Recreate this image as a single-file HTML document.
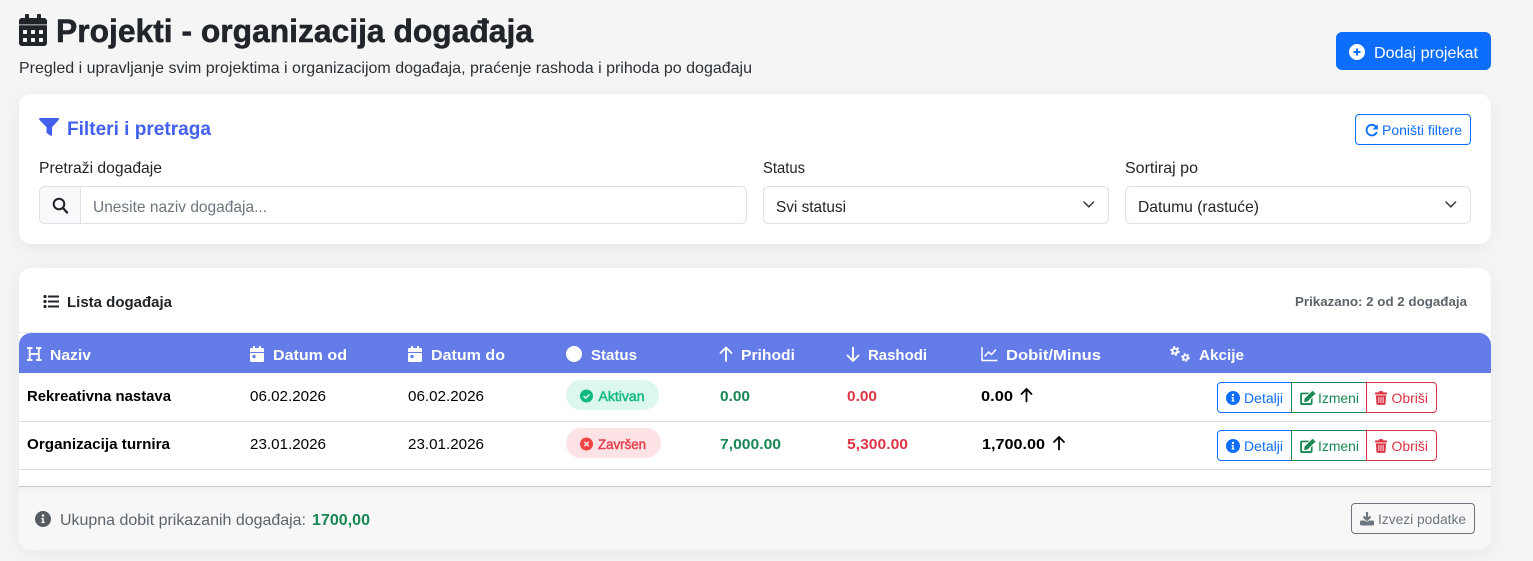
<!DOCTYPE html>
<html lang="sr"><head><meta charset="utf-8"><title>Projekti</title>
<style>
html,body{margin:0;padding:0;width:1533px;height:561px;overflow:hidden;background:#f5f5f5;font-family:"Liberation Sans",sans-serif}
.b{position:absolute;box-sizing:border-box}
.card{background:#fff;border-radius:12px;box-shadow:0 4px 20px rgba(0,0,0,.06)}
svg.o{position:absolute;left:0;top:0}
text{font-family:"Liberation Sans",sans-serif}
.w{font-weight:700}
</style></head><body>
<div class="b" style="left:1336px;top:32px;width:155px;height:38px;background:#0d6efd;border-radius:6px"></div>
<div class="b card" style="left:19px;top:94px;width:1472px;height:150px"></div>
<div class="b" style="left:1355px;top:114px;width:116px;height:31px;border:1px solid #0d6efd;border-radius:4px"></div>
<div class="b" style="left:39px;top:186px;width:708px;height:38px;border:1px solid #dee2e6;border-radius:6px"></div>
<div class="b" style="left:39px;top:186px;width:42px;height:38px;border:1px solid #dee2e6;border-radius:6px 0 0 6px;background:#f8f9fa"></div>
<div class="b" style="left:763px;top:186px;width:346px;height:38px;border:1px solid #dee2e6;border-radius:6px"></div>
<div class="b" style="left:1125px;top:186px;width:346px;height:38px;border:1px solid #dee2e6;border-radius:6px"></div>

<div class="b card" style="left:19px;top:268px;width:1472px;height:282px;overflow:hidden">
  <div class="b" style="left:0;top:64px;width:1472px;height:1px;background:#e9ecef"></div>
  <div class="b" style="left:0;top:65px;width:1472px;height:40px;background:#647ce8;border-radius:12px 12px 0 0"></div>
  <div class="b" style="left:0;top:153px;width:1472px;height:1px;background:#dee2e6"></div>
  <div class="b" style="left:0;top:201px;width:1472px;height:1px;background:#dee2e6"></div>
  <div class="b" style="left:0;top:218px;width:1472px;height:64px;background:#f7f7f7;border-top:1px solid #c9c9c9;box-shadow:inset 0 6px 8px -6px rgba(0,0,0,.06)"></div>
</div>

<div class="b" style="left:566px;top:380px;width:93px;height:30px;background:#dcf7ef;border-radius:15px"></div>
<div class="b" style="left:566px;top:428px;width:95px;height:30px;background:#fde2e6;border-radius:15px"></div>

<div class="b" style="left:1217px;top:382px;width:75px;height:31px;border:1px solid #0d6efd;border-radius:4px 0 0 4px"></div>
<div class="b" style="left:1291px;top:382px;width:76px;height:31px;border:1px solid #198754"></div>
<div class="b" style="left:1366px;top:382px;width:71px;height:31px;border:1px solid #dc3545;border-radius:0 4px 4px 0"></div>
<div class="b" style="left:1217px;top:430px;width:75px;height:31px;border:1px solid #0d6efd;border-radius:4px 0 0 4px"></div>
<div class="b" style="left:1291px;top:430px;width:76px;height:31px;border:1px solid #198754"></div>
<div class="b" style="left:1366px;top:430px;width:71px;height:31px;border:1px solid #dc3545;border-radius:0 4px 4px 0"></div>
<div class="b" style="left:1351px;top:503px;width:124px;height:31px;border:1px solid #6c757d;border-radius:4px"></div>

<svg class="o" width="1533" height="561" viewBox="0 0 1533 561" xmlns="http://www.w3.org/2000/svg">
<defs>
<symbol id="cal" viewBox="0 0 448 512"><path fill="currentColor" d="M0 464c0 26.500 21.500 48 48 48h352c26.500 0 48-21.500 48-48V180H0v284zm320-196c0-6.600 5.400-12 12-12h40c6.600 0 12 5.400 12 12v40c0 6.600-5.400 12-12 12h-40c-6.600 0-12-5.400-12-12v-40zm0 128c0-6.600 5.400-12 12-12h40c6.600 0 12 5.400 12 12v40c0 6.600-5.400 12-12 12h-40c-6.600 0-12-5.400-12-12v-40zM192 268c0-6.600 5.400-12 12-12h40c6.600 0 12 5.400 12 12v40c0 6.600-5.400 12-12 12h-40c-6.600 0-12-5.400-12-12v-40zm0 128c0-6.600 5.400-12 12-12h40c6.600 0 12 5.400 12 12v40c0 6.600-5.400 12-12 12h-40c-6.600 0-12-5.400-12-12v-40zM64 268c0-6.600 5.400-12 12-12h40c6.600 0 12 5.400 12 12v40c0 6.600-5.400 12-12 12H76c-6.600 0-12-5.400-12-12v-40zm0 128c0-6.600 5.400-12 12-12h40c6.600 0 12 5.400 12 12v40c0 6.600-5.400 12-12 12H76c-6.600 0-12-5.400-12-12v-40zM400 64h-48V16c0-8.800-7.200-16-16-16h-32c-8.800 0-16 7.200-16 16v48H160V16c0-8.800-7.200-16-16-16h-32c-8.800 0-16 7.200-16 16v48H48C21.500 64 0 85.500 0 112v56h448v-56c0-26.500-21.500-48-48-48z"/></symbol>
<symbol id="calh" viewBox="0 0 14 16"><path fill="#fff" fill-rule="evenodd" d="M3 0h2v2h4V0h2v2h1.500A1.500 1.500 0 0 1 14 3.500V6H0V3.500A1.500 1.500 0 0 1 1.500 2H3zM0 7h14v7.500a1.500 1.500 0 0 1-1.500 1.500h-11A1.500 1.500 0 0 1 0 14.500zm2.500 2v3h3V9z"/></symbol>
<symbol id="info" viewBox="0 0 16 16"><path fill="currentColor" fill-rule="evenodd" d="M8 0a8 8 0 1 1 0 16A8 8 0 0 1 8 0zm0 3.200a1.300 1.300 0 1 0 0 2.600 1.300 1.300 0 0 0 0-2.600zM6.300 6.900v1.300h.9v2.500h-.9V12h3.400v-1.300h-.9V6.900z"/></symbol>
<symbol id="edit" viewBox="0 0 18 16"><path fill="currentColor" d="M2 1.800h8.500L8.600 3.700H2.700a.6.600 0 0 0-.6.600v8.900c0 .3.300.6.600.6h9c.3 0 .6-.3.600-.6V9.500l1.900-1.900v6.400c0 1.100-.9 2-2 2H2c-1.100 0-2-.9-2-2V3.800c0-1.100.9-2 2-2z"/><path fill="currentColor" d="M13.100.7l3.300 3.300-8 8-3.900.6.600-3.900zM14 0l.5-.2 3 3-.1.700-.9.700-3.300-3.300z"/></symbol>
<symbol id="trash" viewBox="0 0 14 16"><path fill="currentColor" fill-rule="evenodd" d="M4.600.6C4.800.2 5.100 0 5.500 0h3c.4 0 .7.200.9.600L9.700 1.500H13c.5 0 1 .4 1 .9v1c0 .3-.2.500-.5.500H.5C.2 3.900 0 3.700 0 3.400v-1c0-.5.500-.9 1-.9h3.300zM1 5h12l-.7 9.600c-.1.800-.7 1.400-1.500 1.400H3.200c-.8 0-1.400-.6-1.500-1.400zm3 1.800v7h1v-7zm2.500 0v7h1v-7zm2.500 0v7h1v-7z"/></symbol>
<symbol id="gear" viewBox="0 0 12 12"><circle cx="6" cy="6" r="3" fill="none" stroke="#fff" stroke-width="2.400"/><circle cx="6" cy="6" r="4.800" fill="none" stroke="#fff" stroke-width="2" stroke-dasharray="2.500 2.530"/></symbol>
</defs>

<use href="#cal" x="19" y="14" width="28" height="32" color="#212529"/>
<text x="56" y="42" font-size="32" class="w" fill="#212529" stroke="#212529" stroke-width=".5" textLength="477" lengthAdjust="spacingAndGlyphs">Projekti - organizacija događaja</text>
<text x="19" y="73" font-size="16" fill="#2b3035" textLength="733" lengthAdjust="spacingAndGlyphs">Pregled i upravljanje svim projektima i organizacijom događaja, praćenje rashoda i prihoda po događaju</text>

<circle cx="1357" cy="52" r="8" fill="#fff"/><path d="M1357 48.500v7M1353.500 52h7" stroke="#0d6efd" stroke-width="2"/>
<text x="1374" y="58" font-size="16" fill="#fff" textLength="104" lengthAdjust="spacingAndGlyphs">Dodaj projekat</text>

<path d="M40 118h18c1 0 1.400 1 .8 1.800l-6.800 7.400v7.500c0 .9-1 1.400-1.700.9l-3.200-2.300c-.4-.3-.6-.6-.6-1.100v-5l-7.100-7.400c-.6-.8-.2-1.800.6-1.800z" fill="#4361ee"/>
<text x="67" y="135" font-size="19" class="w" fill="#4361ee" textLength="144" lengthAdjust="spacingAndGlyphs">Filteri i pretraga</text>

<path d="M1376 126.800A5.300 5.300 0 1 0 1376.800 132" fill="none" stroke="#0d6efd" stroke-width="1.800"/><path d="M1377.800 124.200v5.300h-5.300z" fill="#0d6efd"/>
<text x="1382" y="135" font-size="14" fill="#0d6efd" textLength="80" lengthAdjust="spacingAndGlyphs">Poništi filtere</text>

<text x="39" y="173" font-size="16" fill="#212529" textLength="123" lengthAdjust="spacingAndGlyphs">Pretraži događaje</text>
<text x="763" y="173" font-size="16" fill="#212529" textLength="42" lengthAdjust="spacingAndGlyphs">Status</text>
<text x="1125" y="173" font-size="16" fill="#212529" textLength="73" lengthAdjust="spacingAndGlyphs">Sortiraj po</text>

<circle cx="59" cy="204" r="5.300" fill="none" stroke="#212529" stroke-width="2"/><path d="M63 208l4 4.500" stroke="#212529" stroke-width="2.400" stroke-linecap="round"/>
<text x="93" y="212" font-size="16" fill="#6c757d" textLength="174" lengthAdjust="spacingAndGlyphs">Unesite naziv događaja...</text>
<text x="776" y="212" font-size="16" fill="#212529" textLength="70" lengthAdjust="spacingAndGlyphs">Svi statusi</text>
<text x="1138" y="212" font-size="16" fill="#212529" textLength="121" lengthAdjust="spacingAndGlyphs">Datumu (rastuće)</text>
<path d="M1084 202l4.800 4.800 4.800-4.800M1446 202l4.800 4.800 4.800-4.800" fill="none" stroke="#343a40" stroke-width="1.500" stroke-linecap="round" stroke-linejoin="round"/>

<path d="M48 296.500h11M48 301.500h11M48 306.500h11" stroke="#212529" stroke-width="2"/><circle cx="45" cy="296.500" r="1.600" fill="#212529"/><circle cx="45" cy="301.500" r="1.600" fill="#212529"/><circle cx="45" cy="306.500" r="1.600" fill="#212529"/>
<text x="67" y="307" font-size="15" class="w" fill="#212529" textLength="105" lengthAdjust="spacingAndGlyphs">Lista događaja</text>
<text x="1295" y="306" font-size="13" class="w" fill="#5c636a" textLength="172" lengthAdjust="spacingAndGlyphs">Prikazano: 2 od 2 događaja</text>

<path d="M27 348h5.500M36 348h5.500M27 360h5.500M36 360h5.500M29.700 348v12M38.800 348v12M29.700 354h9" stroke="#fff" stroke-width="2" fill="none" opacity=".92"/>
<text x="50" y="360" font-size="15" class="w" fill="#fff" textLength="41" lengthAdjust="spacingAndGlyphs">Naziv</text>
<use href="#calh" x="250" y="346" width="14" height="16"/>
<text x="273" y="360" font-size="15" class="w" fill="#fff" textLength="74" lengthAdjust="spacingAndGlyphs">Datum od</text>
<use href="#calh" x="408" y="346" width="14" height="16"/>
<text x="431" y="360" font-size="15" class="w" fill="#fff" textLength="74" lengthAdjust="spacingAndGlyphs">Datum do</text>
<circle cx="574" cy="354" r="8" fill="#fff"/>
<text x="591" y="360" font-size="15" class="w" fill="#fff" textLength="46" lengthAdjust="spacingAndGlyphs">Status</text>
<path d="M726 361v-13M720.500 353l5.500-5.500 5.500 5.500" fill="none" stroke="#fff" stroke-width="1.800" stroke-linecap="round"/>
<text x="741" y="360" font-size="15" class="w" fill="#fff" textLength="54" lengthAdjust="spacingAndGlyphs">Prihodi</text>
<path d="M853 347.500v13M847.500 355.500l5.500 5.500 5.500-5.500" fill="none" stroke="#fff" stroke-width="1.800" stroke-linecap="round"/>
<text x="868" y="360" font-size="15" class="w" fill="#fff" textLength="59" lengthAdjust="spacingAndGlyphs">Rashodi</text>
<path d="M982 347v13.500h15.500M984.500 356.500l4-4.500 3 2.500 4.500-5" fill="none" stroke="#fff" stroke-width="1.500"/>
<text x="1006" y="360" font-size="15" class="w" fill="#fff" textLength="95" lengthAdjust="spacingAndGlyphs">Dobit/Minus</text>
<use href="#gear" x="1170" y="346" width="10" height="10"/><use href="#gear" x="1181" y="353" width="9" height="9"/>
<text x="1199" y="360" font-size="15" class="w" fill="#fff" textLength="45" lengthAdjust="spacingAndGlyphs">Akcije</text>

<text x="27" y="401" font-size="15" class="w" fill="#000" textLength="144" lengthAdjust="spacingAndGlyphs">Rekreativna nastava</text>
<text x="250" y="401" font-size="15" fill="#000" textLength="76" lengthAdjust="spacingAndGlyphs">06.02.2026</text>
<text x="408" y="401" font-size="15" fill="#000" textLength="76" lengthAdjust="spacingAndGlyphs">06.02.2026</text>
<circle cx="586.500" cy="396" r="6.500" fill="#10b981"/><path d="M583.500 396l2.200 2.200 3.800-3.800" fill="none" stroke="#dcf7ef" stroke-width="1.500"/>
<text x="598.500" y="401" font-size="13.500" fill="#10b981" textLength="46" lengthAdjust="spacingAndGlyphs" style="stroke:#10b981;stroke-width:.45">Aktivan</text>
<text x="720" y="401" font-size="15" class="w" fill="#198754" textLength="30" lengthAdjust="spacingAndGlyphs">0.00</text>
<text x="847" y="401" font-size="15" class="w" fill="#dc3545" textLength="30" lengthAdjust="spacingAndGlyphs">0.00</text>
<text x="981" y="401" font-size="15" class="w" fill="#000" textLength="32" lengthAdjust="spacingAndGlyphs">0.00</text>
<path d="M1026.500 401.500v-12.500M1021.500 394l5-5 5 5" fill="none" stroke="#000" stroke-width="1.800" stroke-linecap="round"/>

<text x="27" y="449" font-size="15" class="w" fill="#000" textLength="143" lengthAdjust="spacingAndGlyphs">Organizacija turnira</text>
<text x="250" y="449" font-size="15" fill="#000" textLength="76" lengthAdjust="spacingAndGlyphs">23.01.2026</text>
<text x="408" y="449" font-size="15" fill="#000" textLength="76" lengthAdjust="spacingAndGlyphs">23.01.2026</text>
<circle cx="586.500" cy="444" r="6.500" fill="#ef4444"/><path d="M584.300 441.800l4.400 4.400M588.700 441.800l-4.400 4.400" stroke="#fde2e6" stroke-width="1.500"/>
<text x="598" y="449" font-size="13.500" fill="#e5404d" textLength="48" lengthAdjust="spacingAndGlyphs" style="stroke:#e5404d;stroke-width:.45">Završen</text>
<text x="720" y="449" font-size="15" class="w" fill="#198754" textLength="61" lengthAdjust="spacingAndGlyphs">7,000.00</text>
<text x="847" y="449" font-size="15" class="w" fill="#dc3545" textLength="61" lengthAdjust="spacingAndGlyphs">5,300.00</text>
<text x="982" y="449" font-size="15" class="w" fill="#000" textLength="63" lengthAdjust="spacingAndGlyphs">1,700.00</text>
<path d="M1059 449.500v-12.500M1054 442l5-5 5 5" fill="none" stroke="#000" stroke-width="1.800" stroke-linecap="round"/>

<use href="#info" x="1226" y="391" width="14" height="14" color="#0d6efd"/>
<text x="1244" y="403" font-size="14" fill="#0d6efd" textLength="39" lengthAdjust="spacingAndGlyphs">Detalji</text>
<use href="#edit" x="1300" y="391" width="16" height="14" color="#198754"/>
<text x="1318" y="403" font-size="14" fill="#198754" textLength="41" lengthAdjust="spacingAndGlyphs">Izmeni</text>
<use href="#trash" x="1375" y="391" width="12" height="14" color="#dc3545"/>
<text x="1391.500" y="403" font-size="14" fill="#dc3545" textLength="36.500" lengthAdjust="spacingAndGlyphs">Obriši</text>

<use href="#info" x="1226" y="439" width="14" height="14" color="#0d6efd"/>
<text x="1244" y="451" font-size="14" fill="#0d6efd" textLength="39" lengthAdjust="spacingAndGlyphs">Detalji</text>
<use href="#edit" x="1300" y="439" width="16" height="14" color="#198754"/>
<text x="1318" y="451" font-size="14" fill="#198754" textLength="41" lengthAdjust="spacingAndGlyphs">Izmeni</text>
<use href="#trash" x="1375" y="439" width="12" height="14" color="#dc3545"/>
<text x="1391.500" y="451" font-size="14" fill="#dc3545" textLength="36.500" lengthAdjust="spacingAndGlyphs">Obriši</text>

<use href="#info" x="35" y="511" width="16" height="16" color="#555b61"/>
<text x="60" y="525" font-size="16" fill="#5c636a" textLength="246" lengthAdjust="spacingAndGlyphs">Ukupna dobit prikazanih događaja:</text>
<text x="312" y="525" font-size="16" class="w" fill="#198754" textLength="58" lengthAdjust="spacingAndGlyphs">1700,00</text>

<path d="M1367 512v7M1363.500 516.500l3.500 3.500 3.500-3.500" fill="none" stroke="#6c757d" stroke-width="2.200"/><path d="M1360 522c0-1 .5-1.500 1.500-1.500h3l2.500 1.500 2.500-1.500h3c1 0 1.500.5 1.500 1.500v2c0 1-.5 1.500-1.500 1.500h-11c-1 0-1.500-.5-1.500-1.500z" fill="#6c757d"/>
<text x="1378" y="524" font-size="14" fill="#6c757d" textLength="88" lengthAdjust="spacingAndGlyphs">Izvezi podatke</text>
</svg>
</body></html>
